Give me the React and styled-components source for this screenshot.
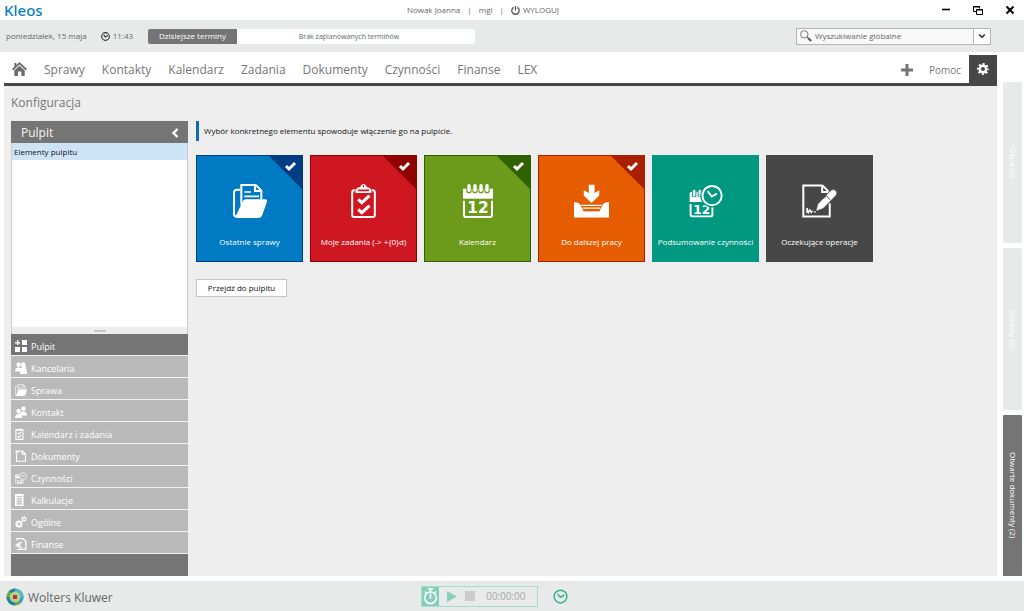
import React, { useState } from "react";
import styled, { createGlobalStyle } from "styled-components";

const GlobalStyle = createGlobalStyle`
  * {
    box-sizing: border-box;
  }
  body {
    margin: 0;
    background: #fff;
    color: #666;
    font-family: "Open Sans", "Noto Sans", sans-serif;
    font-size: 8px;
    line-height: 12px;
  }
  button, input {
    font: inherit;
    color: inherit;
    margin: 0;
    padding: 0;
    border: 0;
    background: none;
  }
  a {
    color: inherit;
    text-decoration: none;
  }
  svg {
    display: block;
    flex: none;
  }
`;

const Page = styled.div`
  display: flex;
  flex-direction: column;
  min-height: 100vh;
`;

/* title bar */
const TitleBar = styled.header`
  display: grid;
  grid-template-columns: 7fr auto 8fr;
  align-items: center;
  height: 20px;
`;
const Brand = styled.div`
  padding-left: 4px;
  color: #0a7dc3;
  font-size: 15px;
  line-height: 20px;
  font-family: "Noto Sans", sans-serif;
  font-weight: 500;
`;
const UserMenu = styled.div`
  display: flex;
  align-items: center;
  gap: 7px;
`;
const LogoutButton = styled.button`
  display: flex;
  align-items: center;
  gap: 3px;
`;
const WindowButtons = styled.div`
  display: flex;
  justify-content: flex-end;
  gap: 22px;
  padding-right: 9px;
  color: #000;
  button {
    display: flex;
  }
`;

/* toolbar */
const ToolBar = styled.div`
  display: flex;
  align-items: center;
  height: 32px;
  padding-left: 6px;
  padding-right: 33px;
  background: #e8eae9;
`;
const Clock = styled.div`
  display: flex;
  align-items: center;
  gap: 3px;
  margin: 0 15px 0 14px;
`;
const TodayButton = styled.button`
  width: 89px;
  height: 15px;
  border-radius: 2px 0 0 2px;
  background: #757575;
  color: #fff;
`;
const TodayInfo = styled.div`
  width: 238px;
  height: 15px;
  padding-right: 14px;
  border-radius: 0 2px 2px 0;
  background: #fff;
  font-size: 7px;
  line-height: 15px;
  text-align: center;
`;
const Search = styled.form`
  display: flex;
  align-items: center;
  width: 195px;
  height: 17px;
  margin-left: auto;
  padding-left: 3px;
  border: 1px solid #b4b4b4;
  background: #f8f8f8;
  input {
    flex: 1;
    min-width: 0;
    padding-left: 3px;
    outline: 0;
  }
  input::placeholder {
    color: #666;
    opacity: 1;
  }
  button {
    display: flex;
    align-items: center;
    justify-content: center;
    width: 17px;
    height: 15px;
    border-left: 1px solid #b4b4b4;
    background: #fff;
    color: #222;
  }
`;

/* main area */
const Body = styled.div`
  display: flex;
  flex: 1;
  padding: 3px 2px 5px 4px;
`;
const Workspace = styled.div`
  display: flex;
  flex: 1;
  flex-direction: column;
  background: #eee;
`;
const Nav = styled.nav`
  display: flex;
  align-items: center;
  gap: 17px;
  height: 31px;
  padding-left: 8px;
  border-bottom: 3px solid #464646;
  background: #fff;
  color: #767676;
  font-size: 12px;
  line-height: 16px;
`;
const NavLink = styled.a`
  padding-top: 2px;
`;
const NavRight = styled.div`
  display: flex;
  align-items: center;
  align-self: flex-start;
  height: 31px;
  margin-left: auto;
  font-size: 10px;
  button:first-child {
    margin-right: 16px;
    padding-bottom: 2px;
  }
  a {
    margin-right: 8px;
    padding-bottom: 2px;
  }
`;
const GearButton = styled.button`
  display: flex;
  align-items: center;
  justify-content: center;
  width: 28px;
  height: 31px;
  padding-bottom: 3px;
  background: #464646;
  color: #fff;
`;
const Heading = styled.h1`
  margin: 0;
  padding: 9px 7px 10px;
  color: #767676;
  font-size: 12px;
  line-height: 16px;
  font-weight: 400;
`;
const Columns = styled.div`
  display: flex;
  flex: 1;
  gap: 8px;
  padding-left: 7px;
`;

const Sidebar = styled.aside`
  display: flex;
  flex-direction: column;
  width: 177px;
  flex: none;
`;
const SidebarHead = styled.div`
  display: flex;
  align-items: center;
  justify-content: space-between;
  height: 22px;
  padding: 1px 9px 0 10px;
  background: #757575;
  color: #f4f4f4;
  font-size: 12px;
`;
const ItemList = styled.div`
  flex: 1;
  min-height: 60px;
  border: 1px solid #ccc;
  border-width: 0 1px;
  background: #fff;
`;
const ListItem = styled.button`
  display: block;
  width: 100%;
  height: 17px;
  padding-left: 2px;
  background: #cde4f7;
  color: #111;
  text-align: left;
`;
const Splitter = styled.div`
  display: flex;
  align-items: center;
  justify-content: center;
  height: 7px;
  border: 1px solid #ccc;
  border-width: 0 1px;
  &::before {
    content: "";
    width: 12px;
    height: 2px;
    background: #c6c6c6;
  }
`;
const SideButton = styled.button`
  display: flex;
  align-items: center;
  gap: 4px;
  height: 22px;
  padding: 2px 0 0 4px;
  border-bottom: 1px solid #f2f2f2;
  background: ${(p) => (p.$active ? "#757575" : "#b9b9b9")};
  color: #fff;
  font-size: 9px;
  span {
    padding-top: 2px;
  }
`;
const SidebarFoot = styled.div`
  height: 22px;
  background: #757575;
`;

const Content = styled.main`
  flex: 1;
  min-width: 0;
`;
const Info = styled.p`
  margin: 0 0 14px;
  padding-left: 5px;
  border-left: 3px solid #0a6ebd;
  color: #111;
  line-height: 20px;
`;
const Tiles = styled.div`
  display: flex;
  flex-wrap: wrap;
  gap: 7px;
  margin-bottom: 17px;
`;
const Tile = styled.label`
  position: relative;
  display: flex;
  flex-direction: column;
  align-items: center;
  gap: 18px;
  width: 107px;
  height: 107px;
  padding-top: 28px;
  border: 1px solid ${(p) => p.$edge};
  background: ${(p) => p.$color};
  color: #fff;
  white-space: nowrap;
  input {
    position: absolute;
    top: 0;
    right: 0;
    width: 32px;
    height: 32px;
    opacity: 0;
  }
`;
const Corner = styled.span`
  position: absolute;
  top: 0;
  right: 0;
  width: 33px;
  height: 33px;
  padding: 4px 0 0 15px;
  background: ${(p) => p.$edge};
  clip-path: polygon(0 0, 100% 0, 100% 100%);
`;
const PlainButton = styled.button`
  height: 18px;
  width: 91px;
  border: 1px solid #c4c4c4;
  background: #fff;
  color: #111;
`;

const SideTabs = styled.div`
  display: flex;
  flex-direction: column;
  gap: 5px;
  width: 19px;
  margin: 27px 0 0 6px;
`;
const SideTab = styled.button`
  flex: 1;
  writing-mode: vertical-rl;
  border-radius: 1px;
  background: ${(p) => (p.$active ? "#757575" : "#e8eae9")};
  color: #fff;
`;

/* footer */
const Footer = styled.footer`
  display: grid;
  grid-template-columns: 12fr auto 13fr;
  align-items: center;
  height: 30px;
  background: #e8eae9;
`;
const Company = styled.div`
  display: flex;
  align-items: center;
  gap: 4px;
  padding: 2px 0 0 6px;
  font-size: 12px;
  line-height: 16px;
  span {
    padding-top: 2px;
  }
`;
const TimerRow = styled.div`
  display: flex;
  align-items: center;
  gap: 15px;
  button {
    display: flex;
  }
`;
const Timer = styled.div`
  display: flex;
  align-items: center;
  gap: 8px;
  width: 117px;
  height: 21px;
  border: 1px solid #a3dccb;
  color: #a5a9a8;
  font-size: 10px;
  time {
    padding-left: 3px;
  }
`;
const StopWatch = styled.span`
  display: flex;
  align-items: center;
  justify-content: center;
  width: 17px;
  height: 19px;
  background: #86d0bb;
`;

function FolderIcon({ size = 34 }) {
  return (
    <svg width={size} height={size} viewBox="0 0 102 102" fill="none" stroke="#fff" strokeWidth="6">
      <path d="M22 17H12Q3 17 3 26V90Q3 98 12 98" />
      <path d="M25 62V3H68L85 20V46M66 3V21H85" />
      <path d="M34 24H54M34 37H78" strokeWidth="5" />
      <path d="M38 46H98Q103 47 102 53L87 95Q84 102 76 102H12Q6 101 9 95L28 54Q31 46 38 46Z" fill="#fff" stroke="none" />
    </svg>
  );
}

function ClipboardIcon({ color }) {
  return (
    <svg width="25" height="34" viewBox="0 0 74 102" fill="none" stroke="#fff">
      <path d="M12 19H9Q3 19 3 26V93Q3 99 9 99H65Q71 99 71 93V26Q71 19 65 19H62" strokeWidth="6" />
      <path d="M13 27V20Q14 12 27 9Q30 0 37 0Q44 0 47 9Q60 12 61 20V27Z" fill="#fff" stroke="none" />
      <path d="M22 19H52" stroke={color} strokeWidth="5" strokeLinecap="round" />
      <path d="M37 5V8" stroke={color} strokeWidth="4" strokeLinecap="round" />
      <path d="M21 46L32 56L55 35M21 76L32 86L55 65" strokeWidth="9" />
    </svg>
  );
}

function CalendarIcon({ color }) {
  return (
    <svg width="30" height="34" viewBox="0 0 90 102">
      <path d="M0 14H90V44H0Z" fill="#fff" />
      {[18, 36, 54, 72].map((x) => (
        <g key={x} strokeLinecap="round">
          <path d={`M${x} 4V20`} stroke={color} strokeWidth="16" />
          <path d={`M${x} 5V19`} stroke="#fff" strokeWidth="10" />
        </g>
      ))}
      <path d="M3 50V92Q3 99 10 99H80Q87 99 87 92V50" fill="none" stroke="#fff" strokeWidth="6" />
      <text x="45" y="88" fill="#fff" fontFamily="DejaVu Sans" fontWeight="700" fontSize="46" textAnchor="middle">12</text>
    </svg>
  );
}

function TrayIcon({ color }) {
  return (
    <svg width="35" height="34" viewBox="0 0 104 100">
      <path d="M44 2H61V26L75 18V34L52 56L29 34V18L44 26Z" fill="#fff" />
      <path d="M0 54Q15 53 20 63L28 80H76L84 63Q89 53 104 54V99H0Z" fill="#fff" />
      <path d="M22 63H82M26 71H78" stroke="#fff" strokeWidth="4" />
      <path d="M28 80H76" stroke={color} strokeWidth="2" />
    </svg>
  );
}

function CalendarClockIcon({ size = 34, color }) {
  return (
    <svg width={size} height={size} viewBox="0 0 106 102" fill="none" stroke="#fff">
      <path d="M2 28Q2 22 8 22H60V54H2Z" fill="#fff" stroke="none" />
      <path d="M16 18V38M34 18V38" stroke={color} strokeWidth="14" />
      <path d="M16 20V32M34 20V32" strokeWidth="8" strokeLinecap="round" />
      <path d="M5 60V92Q5 99 12 99H66Q73 99 73 92V62" strokeWidth="6" />
      <text x="40" y="92" fill="#fff" stroke="none" fontFamily="DejaVu Sans" fontWeight="700" fontSize="38" textAnchor="middle">12</text>
      <circle cx="72" cy="34" r="34" fill={color} stroke={color} strokeWidth="6" />
      <circle cx="72" cy="34" r="30" fill={color} strokeWidth="6" />
      <path d="M58 20L71 37L87 28" strokeWidth="6" />
    </svg>
  );
}

function SignIcon({ color }) {
  return (
    <svg width="35" height="34" viewBox="0 0 106 102" fill="none" stroke="#fff">
      <path d="M62 4H4V98H84V58M62 4L80 22" strokeWidth="6" />
      <path d="M61 4V24H80" strokeWidth="6" />
      <path d="M15 88V72L20 86L24 78L28 86L32 80M36 84H42" strokeWidth="4" />
      <path d="M42 82L48 60L86 20Q95 13 102 19Q109 26 102 35L64 74Z" fill="#fff" stroke={color} strokeWidth="2" />
      <path d="M62 44L74 36L86 48" stroke={color} strokeWidth="3" />
    </svg>
  );
}

function ClockIcon({ size, color, width = 2 }) {
  return (
    <svg width={size} height={size} viewBox="0 0 16 16" fill="none" stroke={color} strokeWidth={width}>
      <circle cx="8" cy="8" r="6.8" />
      <path d="M4.8 5.2L7.8 8.8L12 6.4" />
    </svg>
  );
}

function GearIcon({ size = 13, x, y }) {
  return (
    <svg x={x} y={y} width={size} height={size} viewBox="0 0 24 24" fill="none" stroke="#fff">
      <circle cx="12" cy="12" r="6.5" strokeWidth="5" />
      <circle cx="12" cy="12" r="10" strokeWidth="4" strokeDasharray="3.93 3.93" strokeDashoffset="2" />
    </svg>
  );
}

function CheckIcon() {
  return (
    <svg width="13" height="12" viewBox="0 0 13 12">
      <path d="M2 6L5 9L11 3" fill="none" stroke="#fff" strokeWidth="3" />
    </svg>
  );
}

const person = (x, y) => (
  <path d={`M${x} ${y}a2.2 2.4 0 1 1 .1 0M${x - 3.6} ${y + 4.5}q0-4 3.6-4t3.6 4z`} />
);

const smallIcons = {
  desktop: (
    <path d="M7 0H12V5H7ZM0 7H5V12H0ZM7 7H12V12H7ZM2 0H3.4V2H5V3.4H3.4V5H2V3.4H0V2H2Z" />
  ),
  office: (
    <>
      {person(8.2, 5)}
      {person(3.6, 5)}
      {person(8.6, 7.5)}
    </>
  ),
  contact: (
    <>
      {person(8.4, 5)}
      {person(3.6, 7.5)}
    </>
  ),
  document: (
    <path d="M3.5 1H7.5L10.5 4V11.3H1.5V4M7.3 1V4.2H10.5M0 2H4M2 0V4" fill="none" stroke="#fff" strokeWidth="1.1" />
  ),
  calc: (
    <>
      <path d="M0 0H8.6V12H0Z" />
      <path d="M1.4 2.4H7.2M1.4 5H7.2M1.4 7.4H7.2M1.4 9.8H7.2M3.3 4V11M5.4 4V11" stroke="#b9b9b9" strokeWidth=".9" />
    </>
  ),
  gears: (
    <>
      <GearIcon size={8} x={0} y={4} />
      <GearIcon size={6} x={6} y={0} />
    </>
  ),
  finance: (
    <>
      <path d="M2 2.4V.7H8L10.8 3.6V11.3H2" fill="none" stroke="#fff" strokeWidth="1.3" />
      <path d="M7 4.8A2.6 2.6 0 1 0 7 9.2M.6 6.4H5.4M.6 7.8H5.4" fill="none" stroke="#fff" strokeWidth="1.2" />
    </>
  ),
};

function SmallIcon({ name }) {
  if (name === "folder") return <FolderIcon size={12} />;
  if (name === "tasks")
    return (
      <svg width="12" height="12" viewBox="0 0 12 12" fill="none" stroke="#fff">
        <path d="M2.4 1.6H.9V11.4H7.9V1.6H6.4M2.4 2.3V1.2H6.4V2.3Z" strokeWidth="1.1" />
        <path d="M2.6 5L3.9 6L6.2 4M2.6 8.2L3.9 9.2L6.2 7.2" strokeWidth="1.1" />
      </svg>
    );
  if (name === "activities") return <CalendarClockIcon size={12} color="#b9b9b9" />;
  return (
    <svg width="12" height="12" viewBox="0 0 12 12" fill="#fff">
      {smallIcons[name]}
    </svg>
  );
}

const navItems = ["Sprawy", "Kontakty", "Kalendarz", "Zadania", "Dokumenty", "Czynności", "Finanse", "LEX"];

const sideItems = [
  ["desktop", "Pulpit"],
  ["office", "Kancelaria"],
  ["folder", "Sprawa"],
  ["contact", "Kontakt"],
  ["tasks", "Kalendarz i zadania"],
  ["document", "Dokumenty"],
  ["activities", "Czynności"],
  ["calc", "Kalkulacje"],
  ["gears", "Ogólne"],
  ["finance", "Finanse"],
];

const tiles = [
  { label: "Ostatnie sprawy", Icon: FolderIcon, color: "#007ac3", edge: "#003d85", on: true },
  { label: "Moje zadania (-> +{0}d)", Icon: ClipboardIcon, color: "#cf1722", edge: "#8f0000", on: true },
  { label: "Kalendarz", Icon: CalendarIcon, color: "#6c9a1b", edge: "#2f6100", on: true },
  { label: "Do dalszej pracy", Icon: TrayIcon, color: "#e65c00", edge: "#a82000", on: true },
  { label: "Podsumowanie czynności", Icon: CalendarClockIcon, color: "#009881", edge: "#009881", on: false },
  { label: "Oczekujące operacje", Icon: SignIcon, color: "#474747", edge: "#474747", on: false },
];

export default function App() {
  const [checked, setChecked] = useState(tiles.map((t) => t.on));
  const [section, setSection] = useState("Pulpit");

  const toggle = (i) => setChecked(checked.map((c, n) => (n === i ? !c : c)));

  return (
    <>
      <GlobalStyle />
      <Page>
        <TitleBar>
          <Brand>Kleos</Brand>
          <UserMenu>
            <span>Nowak Joanna</span>
            <span>|</span>
            <span>mgl</span>
            <span>|</span>
            <LogoutButton>
              <svg width="9" height="9" viewBox="0 0 9 9" fill="none" stroke="#555" strokeWidth="1.3">
                <path d="M2.6 1.4A3.7 3.7 0 1 0 6.4 1.4M4.5 0V4.4" />
              </svg>
              WYLOGUJ
            </LogoutButton>
          </UserMenu>
          <WindowButtons>
            <button aria-label="Minimalizuj">
              <svg width="10" height="10" viewBox="0 0 10 10">
                <path d="M1 4.5H9" stroke="#000" strokeWidth="1.6" />
              </svg>
            </button>
            <button aria-label="Przywróć">
              <svg width="10" height="10" viewBox="0 0 10 10" fill="none" stroke="#000">
                <path d="M3 6.5H.5V1.5H6.5V3.5M.5 2H6.5M3.5 4.5H9.5V9.5H3.5ZM3.5 5H9.5" />
              </svg>
            </button>
            <button aria-label="Zamknij">
              <svg width="10" height="10" viewBox="0 0 10 10">
                <path d="M1.5 1.5L8.5 8.5M8.5 1.5L1.5 8.5" stroke="#000" strokeWidth="2" />
              </svg>
            </button>
          </WindowButtons>
        </TitleBar>

        <ToolBar>
          <span>poniedziałek, 15 maja</span>
          <Clock>
            <ClockIcon size={9} color="#333" />
            11:43
          </Clock>
          <TodayButton>Dzisiejsze terminy</TodayButton>
          <TodayInfo>Brak zaplanowanych terminów</TodayInfo>
          <Search>
            <svg width="12" height="12" viewBox="0 0 12 12" fill="none" stroke="#777">
              <circle cx="4.3" cy="4.3" r="3.7" />
              <path d="M7 7L8.4 8.4" />
              <path d="M8 8L11.2 11" stroke="#555" strokeWidth="2" />
            </svg>
            <input type="text" aria-label="Wyszukiwanie globalne" placeholder="Wyszukiwanie globalne" />
            <button type="button" aria-label="Opcje wyszukiwania">
              <svg width="8" height="6" viewBox="0 0 8 6">
                <path d="M1.2 1.4L4 4.2L6.8 1.4" fill="none" stroke="#222" strokeWidth="1.4" />
              </svg>
            </button>
          </Search>
        </ToolBar>

        <Body>
          <Workspace>
            <Nav>
              <a href="#start" aria-label="Start">
                <svg width="15" height="15" viewBox="0 0 15 15" fill="#6b6b6b">
                  <path d="M7.5 0L15 7L13.8 8.4L7.5 2.6L1.2 8.4L0 7L2.4 4.8V1H4.4V3Z" />
                  <path d="M7.5 3.8L12.7 8.6V14H9.4V9.5H6V14H2.3V8.6Z" />
                </svg>
              </a>
              {navItems.map((item) => (
                <NavLink href={"#" + item} key={item}>
                  {item}
                </NavLink>
              ))}
              <NavRight>
                <button aria-label="Dodaj">
                  <svg width="12" height="12" viewBox="0 0 12 12">
                    <path d="M6 0V12M0 6H12" stroke="#757575" strokeWidth="3" />
                  </svg>
                </button>
                <a href="#pomoc">Pomoc</a>
                <GearButton aria-label="Konfiguracja">
                  <GearIcon size={12} />
                </GearButton>
              </NavRight>
            </Nav>
            <Heading>Konfiguracja</Heading>
            <Columns>
              <Sidebar>
                <SidebarHead>
                  Pulpit
                  <button aria-label="Zwiń">
                    <svg width="8" height="10" viewBox="0 0 8 10">
                      <path d="M6.5 1L2.5 5L6.5 9" fill="none" stroke="#fff" strokeWidth="2.4" />
                    </svg>
                  </button>
                </SidebarHead>
                <ItemList>
                  <ListItem>Elementy pulpitu</ListItem>
                </ItemList>
                <Splitter />
                {sideItems.map(([icon, name]) => (
                  <SideButton key={name} $active={name === section} onClick={() => setSection(name)}>
                    <SmallIcon name={icon} />
                    <span>{name}</span>
                  </SideButton>
                ))}
                <SidebarFoot />
              </Sidebar>
              <Content>
                <Info>Wybór konkretnego elementu spowoduje włączenie go na pulpicie.</Info>
                <Tiles>
                  {tiles.map(({ label, Icon, color, edge }, i) => (
                    <Tile key={label} $color={color} $edge={edge}>
                      <input type="checkbox" checked={checked[i]} onChange={() => toggle(i)} />
                      {checked[i] && (
                        <Corner $edge={edge}>
                          <CheckIcon />
                        </Corner>
                      )}
                      <Icon color={color} />
                      <span>{label}</span>
                    </Tile>
                  ))}
                </Tiles>
                <PlainButton>Przejdź do pulpitu</PlainButton>
              </Content>
            </Columns>
          </Workspace>
          <SideTabs>
            <SideTab>Okna (0)</SideTab>
            <SideTab>Sprawy (0)</SideTab>
            <SideTab $active>Otwarte dokumenty (2)</SideTab>
          </SideTabs>
        </Body>

        <Footer>
          <Company>
            <svg width="18" height="18" viewBox="0 0 18 18">
              <circle cx="9" cy="9" r="8.6" fill="#6aa84f" />
              <path d="M9 .4A8.6 8.6 0 0 1 17.6 9H14A5 5 0 0 0 9 4Z" fill="#5fb4c8" />
              <path d="M9 17.6A8.6 8.6 0 0 1 .4 9H4A5 5 0 0 0 9 14Z" fill="#2a7f9e" />
              <path d="M2.9 2.9A8.6 8.6 0 0 1 9 .4V4A5 5 0 0 0 5.4 5.4Z" fill="#2a7f9e" />
              <path d="M15 15A8.6 8.6 0 0 0 17.6 9H14A5 5 0 0 1 12.6 12.6Z" fill="#409bd2" />
              <circle cx="9" cy="9" r="5.4" fill="#a8d78c" />
              <path d="M7 7H11V11H7Z" fill="#d8203e" />
            </svg>
            <span>Wolters Kluwer</span>
          </Company>
          <TimerRow>
            <Timer>
              <StopWatch>
                <svg width="15" height="17" viewBox="0 0 15 17" fill="none" stroke="#fff" strokeWidth="1.6">
                  <circle cx="7.5" cy="9.8" r="5.8" />
                  <path d="M7.5 5.8V10.5M5 1H10M7.5 1V4M2 3.5L3.6 5M13 3.5L11.4 5" />
                </svg>
              </StopWatch>
              <button aria-label="Start stopera">
                <svg width="10" height="11" viewBox="0 0 10 11">
                  <path d="M0 0L10 5.5L0 11Z" fill="#86d0bb" />
                </svg>
              </button>
              <button aria-label="Zatrzymaj">
                <svg width="10" height="10" viewBox="0 0 10 10">
                  <path d="M0 0H10V10H0Z" fill="#c9cbca" />
                </svg>
              </button>
              <time>00:00:00</time>
            </Timer>
            <button aria-label="Historia">
              <ClockIcon size={15} color="#36b08f" width={1.6} />
            </button>
          </TimerRow>
        </Footer>
      </Page>
    </>
  );
}
